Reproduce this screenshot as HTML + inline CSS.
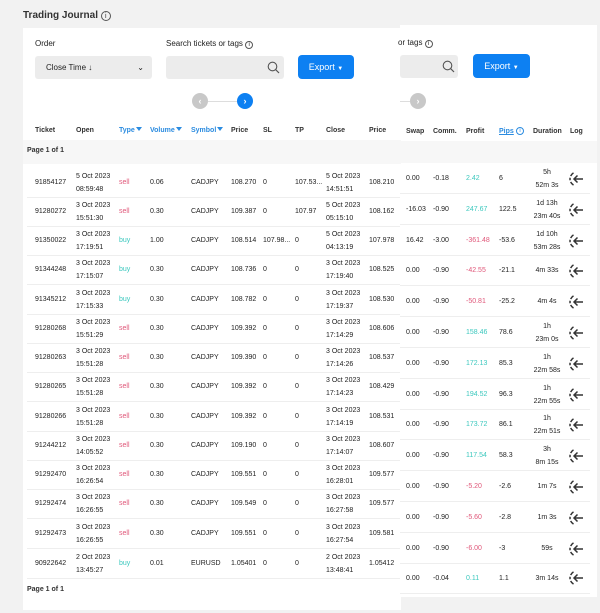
<!DOCTYPE html>
<html><head><meta charset="utf-8"><style>
*{margin:0;padding:0;box-sizing:border-box}
body{width:600px;height:613px;background:#f2f2f2;font-family:"Liberation Sans",sans-serif;color:#222;position:relative;overflow:hidden}
.a{position:absolute;white-space:nowrap}
.s{font-size:7px;line-height:12.5px}
.h{font-size:7px;font-weight:bold;color:#333}
.bl{color:#2a8be0}
.r{color:#e0587a}.g{color:#3cc8be}
.row{position:absolute;height:29px;border-bottom:1px solid #eee}
.rr{position:absolute;height:30px;border-bottom:1px solid #eee}
.tri{display:inline-block;width:0;height:0;border-left:3px solid transparent;border-right:3px solid transparent;border-top:4px solid #2a8be0;margin-left:1px;vertical-align:1px}
.btn{background:#0d80f2;color:#fff;border-radius:4px;font-size:9px;text-align:center;line-height:24px}
.box{background:#ececec;border-radius:3px}
.circ{width:16px;height:16px;border-radius:50%;color:#fff;font-size:9px;text-align:center;line-height:16px;font-weight:bold}
</style></head><body>
<div class="a" style="left:23px;top:10px;font-size:10px;font-weight:bold;color:#333">Trading Journal <span style="font-weight:normal;font-size:9px;border:1px solid #555;border-radius:50%;display:inline-block;width:10px;height:10px;line-height:9px;text-align:center;font-size:7px">i</span></div>
<div class="a" style="left:23px;top:28px;width:378px;height:582px;background:#fff"></div>
<div class="a" style="left:400px;top:25px;width:197px;height:572px;background:#fff"></div>

<div class="a" style="left:35px;top:39px;font-size:8px">Order</div>
<div class="a box" style="left:35px;top:56px;width:117px;height:23px;font-size:8px;line-height:23px;padding-left:11px">Close Time ↓<span style="position:absolute;right:8px;font-size:8px">&#8964;</span></div>
<div class="a" style="left:166px;top:39px;font-size:8px">Search tickets or tags <span style="font-size:6px;border:1px solid #555;border-radius:50%;display:inline-block;width:8px;height:8px;line-height:7px;text-align:center">i</span></div>
<div class="a box" style="left:166px;top:56px;width:118px;height:23px"></div>
<svg class="a" style="left:267px;top:61px" width="13" height="13"><circle cx="5.5" cy="5.5" r="4.3" fill="none" stroke="#555" stroke-width="1.1"/><line x1="8.6" y1="8.6" x2="12" y2="12" stroke="#555" stroke-width="1.2"/></svg>
<div class="a btn" style="left:298px;top:55px;width:56px;height:24px">Export <span style="font-size:6px">▼</span></div>
<div class="a circ" style="left:192px;top:93px;background:#c8c8c8">‹</div>
<div class="a" style="left:208px;top:101px;width:29px;height:1px;background:#ddd"></div>
<div class="a circ" style="left:237px;top:93px;background:#0d80f2">›</div>

<div class="a" style="left:398px;top:38px;font-size:8px">or tags <span style="font-size:6px;border:1px solid #555;border-radius:50%;display:inline-block;width:8px;height:8px;line-height:7px;text-align:center">i</span></div>
<div class="a box" style="left:400px;top:55px;width:58px;height:23px"></div>
<svg class="a" style="left:442px;top:60px" width="13" height="13"><circle cx="5.5" cy="5.5" r="4.3" fill="none" stroke="#555" stroke-width="1.1"/><line x1="8.6" y1="8.6" x2="12" y2="12" stroke="#555" stroke-width="1.2"/></svg>
<div class="a btn" style="left:473px;top:54px;width:57px;height:24px">Export <span style="font-size:6px">▼</span></div>
<div class="a" style="left:400px;top:101px;width:10px;height:1px;background:#ddd"></div>
<div class="a circ" style="left:410px;top:93px;background:#c8c8c8">›</div>

<div class="a h" style="left:35px;top:127px">Ticket</div>
<div class="a h" style="left:76px;top:127px">Open</div>
<div class="a h bl" style="left:119px;top:127px">Type<span class="tri"></span></div>
<div class="a h bl" style="left:150px;top:127px">Volume<span class="tri"></span></div>
<div class="a h bl" style="left:191px;top:127px">Symbol<span class="tri"></span></div>
<div class="a h" style="left:231px;top:127px">Price</div>
<div class="a h" style="left:263px;top:127px">SL</div>
<div class="a h" style="left:295px;top:127px">TP</div>
<div class="a h" style="left:326px;top:127px">Close</div>
<div class="a h" style="left:369px;top:127px">Price</div>
<div class="a" style="left:23px;top:140px;width:378px;height:24px;background:#f7f7f7"></div>
<div class="a h" style="left:27px;top:147px">Page 1 of 1</div>
<div class="a h" style="left:406px;top:128px">Swap</div>
<div class="a h" style="left:433px;top:128px">Comm.</div>
<div class="a h" style="left:466px;top:128px">Profit</div>
<div class="a h bl" style="left:499px;top:128px;text-decoration:underline">Pips</div>
<div class="a" style="left:516px;top:127px;font-size:6px;color:#2a8be0;border:1px solid #2a8be0;border-radius:50%;width:8px;height:8px;line-height:7px;text-align:center">i</div>
<div class="a h" style="left:533px;top:128px">Duration</div>
<div class="a h" style="left:570px;top:128px">Log</div>
<div class="a" style="left:400px;top:141px;width:197px;height:22px;background:#f7f7f7"></div>

<div class="a h" style="left:27px;top:586px">Page 1 of 1</div>

<svg width="0" height="0" style="position:absolute"><defs><g id="lg"><path d="M5.5 2.9 A7 7 0 0 0 2.66 6.04" fill="none" stroke="#333" stroke-width="1.5"/><path d="M2.1 7.8 A7 7 0 0 0 2.1 10.2" fill="none" stroke="#333" stroke-width="1.5"/><path d="M2.66 11.96 A7 7 0 0 0 5.5 15.06" fill="none" stroke="#333" stroke-width="1.5"/><path d="M15 9 H6 M9.5 5.5 L6 9 L9.5 12.5" fill="none" stroke="#333" stroke-width="1.5"/></g></defs></svg>

<div class="a s" style="left:0;top:0;width:600px;height:613px">
<div class="row" style="left:27px;top:169px;width:373px"></div>
<div class="a" style="left:35px;top:177px">91854127</div><div class="a" style="left:76px;top:171px">5 Oct 2023<br>08:59:48</div><div class="a r" style="left:119px;top:177px">sell</div><div class="a" style="left:150px;top:177px">0.06</div><div class="a" style="left:191px;top:177px">CADJPY</div><div class="a" style="left:231px;top:177px">108.270</div><div class="a" style="left:263px;top:177px">0</div><div class="a" style="left:295px;top:177px">107.53...</div><div class="a" style="left:326px;top:171px">5 Oct 2023<br>14:51:51</div><div class="a" style="left:369px;top:177px">108.210</div>

<div class="row" style="left:27px;top:198px;width:373px"></div>
<div class="a" style="left:35px;top:206px">91280272</div><div class="a" style="left:76px;top:200px">3 Oct 2023<br>15:51:30</div><div class="a r" style="left:119px;top:206px">sell</div><div class="a" style="left:150px;top:206px">0.30</div><div class="a" style="left:191px;top:206px">CADJPY</div><div class="a" style="left:231px;top:206px">109.387</div><div class="a" style="left:263px;top:206px">0</div><div class="a" style="left:295px;top:206px">107.97</div><div class="a" style="left:326px;top:200px">5 Oct 2023<br>05:15:10</div><div class="a" style="left:369px;top:206px">108.162</div>

<div class="row" style="left:27px;top:227px;width:373px"></div>
<div class="a" style="left:35px;top:235px">91350022</div><div class="a" style="left:76px;top:229px">3 Oct 2023<br>17:19:51</div><div class="a g" style="left:119px;top:235px">buy</div><div class="a" style="left:150px;top:235px">1.00</div><div class="a" style="left:191px;top:235px">CADJPY</div><div class="a" style="left:231px;top:235px">108.514</div><div class="a" style="left:263px;top:235px">107.98...</div><div class="a" style="left:295px;top:235px">0</div><div class="a" style="left:326px;top:229px">5 Oct 2023<br>04:13:19</div><div class="a" style="left:369px;top:235px">107.978</div>

<div class="row" style="left:27px;top:256px;width:373px"></div>
<div class="a" style="left:35px;top:264px">91344248</div><div class="a" style="left:76px;top:258px">3 Oct 2023<br>17:15:07</div><div class="a g" style="left:119px;top:264px">buy</div><div class="a" style="left:150px;top:264px">0.30</div><div class="a" style="left:191px;top:264px">CADJPY</div><div class="a" style="left:231px;top:264px">108.736</div><div class="a" style="left:263px;top:264px">0</div><div class="a" style="left:295px;top:264px">0</div><div class="a" style="left:326px;top:258px">3 Oct 2023<br>17:19:40</div><div class="a" style="left:369px;top:264px">108.525</div>

<div class="row" style="left:27px;top:286px;width:373px"></div>
<div class="a" style="left:35px;top:294px">91345212</div><div class="a" style="left:76px;top:288px">3 Oct 2023<br>17:15:33</div><div class="a g" style="left:119px;top:294px">buy</div><div class="a" style="left:150px;top:294px">0.30</div><div class="a" style="left:191px;top:294px">CADJPY</div><div class="a" style="left:231px;top:294px">108.782</div><div class="a" style="left:263px;top:294px">0</div><div class="a" style="left:295px;top:294px">0</div><div class="a" style="left:326px;top:288px">3 Oct 2023<br>17:19:37</div><div class="a" style="left:369px;top:294px">108.530</div>

<div class="row" style="left:27px;top:315px;width:373px"></div>
<div class="a" style="left:35px;top:323px">91280268</div><div class="a" style="left:76px;top:317px">3 Oct 2023<br>15:51:29</div><div class="a r" style="left:119px;top:323px">sell</div><div class="a" style="left:150px;top:323px">0.30</div><div class="a" style="left:191px;top:323px">CADJPY</div><div class="a" style="left:231px;top:323px">109.392</div><div class="a" style="left:263px;top:323px">0</div><div class="a" style="left:295px;top:323px">0</div><div class="a" style="left:326px;top:317px">3 Oct 2023<br>17:14:29</div><div class="a" style="left:369px;top:323px">108.606</div>

<div class="row" style="left:27px;top:344px;width:373px"></div>
<div class="a" style="left:35px;top:352px">91280263</div><div class="a" style="left:76px;top:346px">3 Oct 2023<br>15:51:28</div><div class="a r" style="left:119px;top:352px">sell</div><div class="a" style="left:150px;top:352px">0.30</div><div class="a" style="left:191px;top:352px">CADJPY</div><div class="a" style="left:231px;top:352px">109.390</div><div class="a" style="left:263px;top:352px">0</div><div class="a" style="left:295px;top:352px">0</div><div class="a" style="left:326px;top:346px">3 Oct 2023<br>17:14:26</div><div class="a" style="left:369px;top:352px">108.537</div>

<div class="row" style="left:27px;top:373px;width:373px"></div>
<div class="a" style="left:35px;top:381px">91280265</div><div class="a" style="left:76px;top:375px">3 Oct 2023<br>15:51:28</div><div class="a r" style="left:119px;top:381px">sell</div><div class="a" style="left:150px;top:381px">0.30</div><div class="a" style="left:191px;top:381px">CADJPY</div><div class="a" style="left:231px;top:381px">109.392</div><div class="a" style="left:263px;top:381px">0</div><div class="a" style="left:295px;top:381px">0</div><div class="a" style="left:326px;top:375px">3 Oct 2023<br>17:14:23</div><div class="a" style="left:369px;top:381px">108.429</div>

<div class="row" style="left:27px;top:403px;width:373px"></div>
<div class="a" style="left:35px;top:411px">91280266</div><div class="a" style="left:76px;top:405px">3 Oct 2023<br>15:51:28</div><div class="a r" style="left:119px;top:411px">sell</div><div class="a" style="left:150px;top:411px">0.30</div><div class="a" style="left:191px;top:411px">CADJPY</div><div class="a" style="left:231px;top:411px">109.392</div><div class="a" style="left:263px;top:411px">0</div><div class="a" style="left:295px;top:411px">0</div><div class="a" style="left:326px;top:405px">3 Oct 2023<br>17:14:19</div><div class="a" style="left:369px;top:411px">108.531</div>

<div class="row" style="left:27px;top:432px;width:373px"></div>
<div class="a" style="left:35px;top:440px">91244212</div><div class="a" style="left:76px;top:434px">3 Oct 2023<br>14:05:52</div><div class="a r" style="left:119px;top:440px">sell</div><div class="a" style="left:150px;top:440px">0.30</div><div class="a" style="left:191px;top:440px">CADJPY</div><div class="a" style="left:231px;top:440px">109.190</div><div class="a" style="left:263px;top:440px">0</div><div class="a" style="left:295px;top:440px">0</div><div class="a" style="left:326px;top:434px">3 Oct 2023<br>17:14:07</div><div class="a" style="left:369px;top:440px">108.607</div>

<div class="row" style="left:27px;top:461px;width:373px"></div>
<div class="a" style="left:35px;top:469px">91292470</div><div class="a" style="left:76px;top:463px">3 Oct 2023<br>16:26:54</div><div class="a r" style="left:119px;top:469px">sell</div><div class="a" style="left:150px;top:469px">0.30</div><div class="a" style="left:191px;top:469px">CADJPY</div><div class="a" style="left:231px;top:469px">109.551</div><div class="a" style="left:263px;top:469px">0</div><div class="a" style="left:295px;top:469px">0</div><div class="a" style="left:326px;top:463px">3 Oct 2023<br>16:28:01</div><div class="a" style="left:369px;top:469px">109.577</div>

<div class="row" style="left:27px;top:490px;width:373px"></div>
<div class="a" style="left:35px;top:498px">91292474</div><div class="a" style="left:76px;top:492px">3 Oct 2023<br>16:26:55</div><div class="a r" style="left:119px;top:498px">sell</div><div class="a" style="left:150px;top:498px">0.30</div><div class="a" style="left:191px;top:498px">CADJPY</div><div class="a" style="left:231px;top:498px">109.549</div><div class="a" style="left:263px;top:498px">0</div><div class="a" style="left:295px;top:498px">0</div><div class="a" style="left:326px;top:492px">3 Oct 2023<br>16:27:58</div><div class="a" style="left:369px;top:498px">109.577</div>

<div class="row" style="left:27px;top:520px;width:373px"></div>
<div class="a" style="left:35px;top:528px">91292473</div><div class="a" style="left:76px;top:522px">3 Oct 2023<br>16:26:55</div><div class="a r" style="left:119px;top:528px">sell</div><div class="a" style="left:150px;top:528px">0.30</div><div class="a" style="left:191px;top:528px">CADJPY</div><div class="a" style="left:231px;top:528px">109.551</div><div class="a" style="left:263px;top:528px">0</div><div class="a" style="left:295px;top:528px">0</div><div class="a" style="left:326px;top:522px">3 Oct 2023<br>16:27:54</div><div class="a" style="left:369px;top:528px">109.581</div>

<div class="row" style="left:27px;top:550px;width:373px"></div>
<div class="a" style="left:35px;top:558px">90922642</div><div class="a" style="left:76px;top:552px">2 Oct 2023<br>13:45:27</div><div class="a g" style="left:119px;top:558px">buy</div><div class="a" style="left:150px;top:558px">0.01</div><div class="a" style="left:191px;top:558px">EURUSD</div><div class="a" style="left:231px;top:558px">1.05401</div><div class="a" style="left:263px;top:558px">0</div><div class="a" style="left:295px;top:558px">0</div><div class="a" style="left:326px;top:552px">2 Oct 2023<br>13:48:41</div><div class="a" style="left:369px;top:558px">1.05412</div>

<div class="rr" style="left:400px;top:164px;width:190px"></div>
<div class="a" style="left:406px;top:173px">0.00</div><div class="a" style="left:433px;top:173px">-0.18</div><div class="a g" style="left:466px;top:173px">2.42</div><div class="a" style="left:499px;top:173px">6</div><div class="a" style="left:533px;top:167px;width:28px;text-align:center">5h<br>52m 3s</div>
<div class="rr" style="left:400px;top:195px;width:190px"></div>
<div class="a" style="left:406px;top:204px">-16.03</div><div class="a" style="left:433px;top:204px">-0.90</div><div class="a g" style="left:466px;top:204px">247.67</div><div class="a" style="left:499px;top:204px">122.5</div><div class="a" style="left:531px;top:198px;width:32px;text-align:center">1d 13h<br>23m 40s</div>
<div class="rr" style="left:400px;top:226px;width:190px"></div>
<div class="a" style="left:406px;top:235px">16.42</div><div class="a" style="left:433px;top:235px">-3.00</div><div class="a r" style="left:466px;top:235px">-361.48</div><div class="a" style="left:499px;top:235px">-53.6</div><div class="a" style="left:531px;top:229px;width:32px;text-align:center">1d 10h<br>53m 28s</div>
<div class="rr" style="left:400px;top:256px;width:190px"></div>
<div class="a" style="left:406px;top:265px">0.00</div><div class="a" style="left:433px;top:265px">-0.90</div><div class="a r" style="left:466px;top:265px">-42.55</div><div class="a" style="left:499px;top:265px">-21.1</div><div class="a" style="left:531px;top:265px;width:32px;text-align:center">4m 33s</div>
<div class="rr" style="left:400px;top:287px;width:190px"></div>
<div class="a" style="left:406px;top:296px">0.00</div><div class="a" style="left:433px;top:296px">-0.90</div><div class="a r" style="left:466px;top:296px">-50.81</div><div class="a" style="left:499px;top:296px">-25.2</div><div class="a" style="left:531px;top:296px;width:32px;text-align:center">4m 4s</div>
<div class="rr" style="left:400px;top:318px;width:190px"></div>
<div class="a" style="left:406px;top:327px">0.00</div><div class="a" style="left:433px;top:327px">-0.90</div><div class="a g" style="left:466px;top:327px">158.46</div><div class="a" style="left:499px;top:327px">78.6</div><div class="a" style="left:531px;top:321px;width:32px;text-align:center">1h<br>23m 0s</div>
<div class="rr" style="left:400px;top:349px;width:190px"></div>
<div class="a" style="left:406px;top:358px">0.00</div><div class="a" style="left:433px;top:358px">-0.90</div><div class="a g" style="left:466px;top:358px">172.13</div><div class="a" style="left:499px;top:358px">85.3</div><div class="a" style="left:531px;top:352px;width:32px;text-align:center">1h<br>22m 58s</div>
<div class="rr" style="left:400px;top:380px;width:190px"></div>
<div class="a" style="left:406px;top:389px">0.00</div><div class="a" style="left:433px;top:389px">-0.90</div><div class="a g" style="left:466px;top:389px">194.52</div><div class="a" style="left:499px;top:389px">96.3</div><div class="a" style="left:531px;top:383px;width:32px;text-align:center">1h<br>22m 55s</div>
<div class="rr" style="left:400px;top:410px;width:190px"></div>
<div class="a" style="left:406px;top:419px">0.00</div><div class="a" style="left:433px;top:419px">-0.90</div><div class="a g" style="left:466px;top:419px">173.72</div><div class="a" style="left:499px;top:419px">86.1</div><div class="a" style="left:531px;top:413px;width:32px;text-align:center">1h<br>22m 51s</div>
<div class="rr" style="left:400px;top:441px;width:190px"></div>
<div class="a" style="left:406px;top:450px">0.00</div><div class="a" style="left:433px;top:450px">-0.90</div><div class="a g" style="left:466px;top:450px">117.54</div><div class="a" style="left:499px;top:450px">58.3</div><div class="a" style="left:531px;top:444px;width:32px;text-align:center">3h<br>8m 15s</div>
<div class="rr" style="left:400px;top:472px;width:190px"></div>
<div class="a" style="left:406px;top:481px">0.00</div><div class="a" style="left:433px;top:481px">-0.90</div><div class="a r" style="left:466px;top:481px">-5.20</div><div class="a" style="left:499px;top:481px">-2.6</div><div class="a" style="left:531px;top:481px;width:32px;text-align:center">1m 7s</div>
<div class="rr" style="left:400px;top:503px;width:190px"></div>
<div class="a" style="left:406px;top:512px">0.00</div><div class="a" style="left:433px;top:512px">-0.90</div><div class="a r" style="left:466px;top:512px">-5.60</div><div class="a" style="left:499px;top:512px">-2.8</div><div class="a" style="left:531px;top:512px;width:32px;text-align:center">1m 3s</div>
<div class="rr" style="left:400px;top:534px;width:190px"></div>
<div class="a" style="left:406px;top:543px">0.00</div><div class="a" style="left:433px;top:543px">-0.90</div><div class="a r" style="left:466px;top:543px">-6.00</div><div class="a" style="left:499px;top:543px">-3</div><div class="a" style="left:531px;top:543px;width:32px;text-align:center">59s</div>
<div class="rr" style="left:400px;top:564px;width:190px"></div>
<div class="a" style="left:406px;top:573px">0.00</div><div class="a" style="left:433px;top:573px">-0.04</div><div class="a g" style="left:466px;top:573px">0.11</div><div class="a" style="left:499px;top:573px">1.1</div><div class="a" style="left:531px;top:573px;width:32px;text-align:center">3m 14s</div>
</div>

<svg class="a" style="left:0;top:0" width="600" height="613">
<use href="#lg" x="568" y="170"/><use href="#lg" x="568" y="201"/><use href="#lg" x="568" y="232"/><use href="#lg" x="568" y="262"/><use href="#lg" x="568" y="293"/><use href="#lg" x="568" y="324"/><use href="#lg" x="568" y="355"/><use href="#lg" x="568" y="386"/><use href="#lg" x="568" y="416"/><use href="#lg" x="568" y="447"/><use href="#lg" x="568" y="478"/><use href="#lg" x="568" y="509"/><use href="#lg" x="568" y="540"/><use href="#lg" x="568" y="569"/>
</svg>
</body></html>
